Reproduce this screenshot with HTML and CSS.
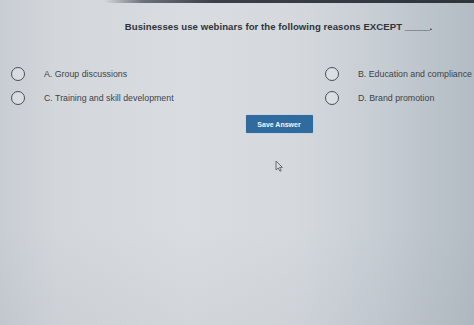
FILE: index.html
```html
<!DOCTYPE html>
<html lang="en">
<head>
  <meta charset="UTF-8" />
  <title>Quiz question</title>
  <link rel="stylesheet" href="styles.css">
</head>
<body>

<div class="topbar"></div>

<main class="quiz">
  <h1 class="question">Businesses use webinars for the following reasons EXCEPT <span class="blank">_____</span>.</h1>

  <div class="options">
    <label class="option"><span class="radio"></span><span class="label">A. Group discussions</span></label>
    <label class="option"><span class="radio"></span><span class="label">B. Education and compliance</span></label>
    <label class="option"><span class="radio"></span><span class="label">C. Training and skill development</span></label>
    <label class="option"><span class="radio"></span><span class="label">D. Brand promotion</span></label>
  </div>

  <div class="actions">
    <button class="save">Save Answer</button>
  </div>
</main>

<!-- mouse pointer over the page -->
<svg class="cursor" width="8" height="12" viewBox="0 0 8 12">
  <path d="M1 1 L1 10 L3.2 8 L5 11.3 L6.3 10.6 L4.6 7.4 L7.4 7.4 Z" fill="#d8dce0" stroke="#5a6068" stroke-width="0.9" stroke-linejoin="round"/>
</svg>

</body>
</html>
```

FILE: styles.css
```css
:root {
  --text: #3d4249;
  --title: #2f343a;
  --ring: #4a4f56;
  --button: #2f6b9e;
}

html, body {
  height: 100%;
}

body {
  margin: 0;
  overflow: hidden;
  font-family: "Liberation Sans", Arial, sans-serif;
  color: var(--text);
  background:
    linear-gradient(to bottom, rgba(255,255,255,0) 0%, rgba(255,255,255,0) 70%, rgba(120,130,140,0.08) 100%),
    linear-gradient(to right, #c8cdd3 0%, #d3d7dc 12%, #d9dde1 40%, #d5d9de 62%, #c6cdd3 80%, #b3bcc4 100%);
  position: relative;
}

.topbar {
  height: 3px;
  background: linear-gradient(to right, rgba(60,66,74,0) 0%, rgba(60,66,74,0) 22%, #6d737a 30%, #3b4048 45%, #30353c 100%);
}

/* the page is cropped on the right, so the centred parts are shifted */
.quiz {
  padding-left: 83px;
}

.question {
  margin: 18px 0 0;
  text-align: center;
  font-size: 9.6px;
  font-weight: bold;
  color: var(--title);
  letter-spacing: 0.05px;
}

.question .blank {
  letter-spacing: -0.4px;
}

.options {
  display: grid;
  grid-template-columns: 314px 1fr;
  row-gap: 10px;
  margin: 35px 0 0 -72px;
}

.option {
  display: flex;
  align-items: center;
  gap: 19px;
  height: 14px;
}

.radio {
  width: 14px;
  height: 14px;
  box-sizing: border-box;
  border: 1.6px solid var(--ring);
  border-radius: 50%;
  background: rgba(255,255,255,0.25);
  flex: none;
}

.label {
  font-size: 8.8px;
  color: var(--text);
  padding-bottom: 1px;
  white-space: nowrap;
}

.actions {
  display: flex;
  justify-content: center;
  margin-top: 10px;
  padding-left: 1px;
}

.save {
  width: 67px;
  height: 18px;
  padding: 0;
  border: none;
  border-radius: 1px;
  background: var(--button);
  color: #f4f7fa;
  font-family: "Liberation Sans", Arial, sans-serif;
  font-size: 7px;
  font-weight: bold;
  box-shadow: 0 0 1px rgba(30,60,90,0.4);
}

.cursor {
  position: absolute;
  left: 275px;
  top: 160px;
}
```
